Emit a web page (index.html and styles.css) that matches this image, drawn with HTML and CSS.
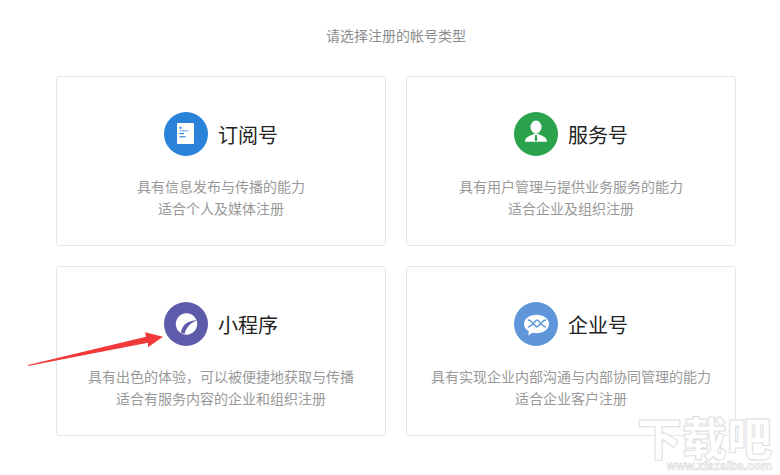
FILE: index.html
```html
<!DOCTYPE html>
<html lang="zh-CN">
<head>
<meta charset="utf-8">
<title>请选择注册的帐号类型</title>
<link rel="stylesheet" href="styles.css">
</head>
<body>
<main class="page">
  <p class="intro">请选择注册的帐号类型</p>
  <section class="grid">
    <article class="card">
      <div class="head">
        <svg class="icon" viewBox="0 0 44 44">
          <circle cx="22" cy="22" r="22" fill="#2a82d9"/>
          <rect x="13" y="11" width="17" height="21" rx="1" fill="#fff"/>
          <g fill="#2a82d9">
            <rect x="15.500" y="14.800" width="2" height="2"/>
            <rect x="15.500" y="18.200" width="9" height="1.200" opacity=".6"/>
            <rect x="15.500" y="21" width="4.500" height="1.100"/>
            <rect x="15.500" y="24.200" width="6" height="1.100"/>
          </g>
        </svg>
        <h2 class="name">订阅号</h2>
      </div>
      <p class="desc">具有信息发布与传播的能力<br>适合个人及媒体注册</p>
    </article>
    <article class="card">
      <div class="head">
        <svg class="icon" viewBox="0 0 44 44">
          <circle cx="22" cy="22" r="22" fill="#2ba24c"/>
          <ellipse cx="22" cy="15" rx="5.500" ry="6.400" fill="#fff"/>
          <path d="M11 29.700c.4-3.800 2.600-5.300 7.500-6.900l1.500-1.300h4l1.500 1.300c4.900 1.600 7.100 3.100 7.500 6.900z" fill="#fff"/>
          <path d="M21.200 23h1.600l.6 4.500-1.400 2.200-1.400-2.200z" fill="#2ba24c"/>
        </svg>
        <h2 class="name">服务号</h2>
      </div>
      <p class="desc">具有用户管理与提供业务服务的能力<br>适合企业及组织注册</p>
    </article>
    <article class="card">
      <div class="head">
        <svg class="icon" viewBox="0 0 44 44">
          <circle cx="22" cy="22" r="22" fill="#5f5bab"/>
          <circle cx="22.500" cy="22" r="10.700" fill="#fff"/>
          <path d="M17 30.500C18 23 24 18.500 33 18.300 27.500 20.500 22.500 24.500 20.500 32z" fill="#5f5bab"/>
        </svg>
        <h2 class="name">小程序</h2>
      </div>
      <p class="desc">具有出色的体验，可以被便捷地获取与传播<br>适合有服务内容的企业和组织注册</p>
    </article>
    <article class="card">
      <div class="head">
        <svg class="icon" viewBox="0 0 44 44">
          <circle cx="22" cy="22" r="22" fill="#5f96d9"/>
          <path d="M22.500 12.800c6.900 0 12.500 4.100 12.500 9.200s-5.600 9.200-12.500 9.200c-1.500 0-2.900-.2-4.200-.5L14.500 33.500l.2-4.300c-2.900-1.700-4.700-4.300-4.700-7.200 0-5.100 5.600-9.200 12.500-9.200z" fill="#fff"/>
          <path d="M14 18C16.500 18 17.500 20 19.300 21.500 21 23.500 22 25 23 25 24 25 25 23.500 26.700 21.500 28.500 20 29.500 18 32 18M14 25C16.500 25 17.500 23 19.300 21.500 21 19.500 22 18 23 18 24 18 25 19.500 26.700 21.500 28.500 23 29.500 25 32 25" fill="none" stroke="#5f96d9" stroke-width="1.500"/>
        </svg>
        <h2 class="name">企业号</h2>
      </div>
      <p class="desc">具有实现企业内部沟通与内部协同管理的能力<br>适合企业客户注册</p>
    </article>
  </section>
</main>
<svg class="arrow" viewBox="0 0 140 40">
  <path d="M0 33 118 4.700 117 .3 135 4.700 120 15.300 120 10.700 0 34z" fill="#f2393a"/>
</svg>
<div class="mark">
  <span class="mark-cn">下载吧</span>
  <span class="mark-url">www.xiazaiba.com</span>
</div>
</body>
</html>
```
FILE: styles.css
```css
* { box-sizing: border-box; }
html, body { margin: 0; padding: 0; }
body {
  width: 780px;
  height: 475px;
  overflow: hidden;
  position: relative;
  background: #fff;
  font-family: "Noto Sans CJK SC", "Noto Sans", sans-serif;
}
.page { width: 680px; margin-left: 56px; padding-top: 26px; }
.intro {
  margin: 0 0 32px;
  font-size: 14px;
  line-height: 18px;
  color: #8d8d8d;
  text-align: center;
}
.grid {
  display: grid;
  grid-template-columns: 330px 330px;
  grid-auto-rows: 170px;
  gap: 20px;
}
.card {
  border: 1px solid #e7e7eb;
  border-radius: 3px;
  padding-top: 35px;
  text-align: center;
}
.head {
  display: flex;
  justify-content: center;
  align-items: center;
  gap: 10px;
  height: 44px;
}
.icon { width: 44px; height: 44px; display: block; }
.name {
  margin: 0;
  padding-top: 2px;
  font-size: 20px;
  font-weight: 400;
  line-height: 28px;
  color: #222;
}
.desc {
  margin: 19px 0 0;
  font-size: 14px;
  line-height: 22px;
  color: #999;
}
.arrow {
  position: absolute;
  left: 28px;
  top: 332px;
  width: 140px;
  height: 40px;
  overflow: visible;
}
.mark {
  position: absolute;
  left: 636px;
  top: 413px;
  width: 136px;
  display: flex;
  flex-direction: column;
  align-items: flex-end;
}
.mark-cn {
  font-size: 45px;
  line-height: 47px;
  font-weight: 900;
  color: #fff;
  -webkit-text-stroke: 1px #dedede;
  white-space: nowrap;
}
.mark-url {
  font-family: "Liberation Sans", sans-serif;
  font-size: 12px;
  line-height: 12px;
  font-weight: 700;
  color: #fff;
  -webkit-text-stroke: .5px #cfcfcf;
  white-space: nowrap;
}
```
